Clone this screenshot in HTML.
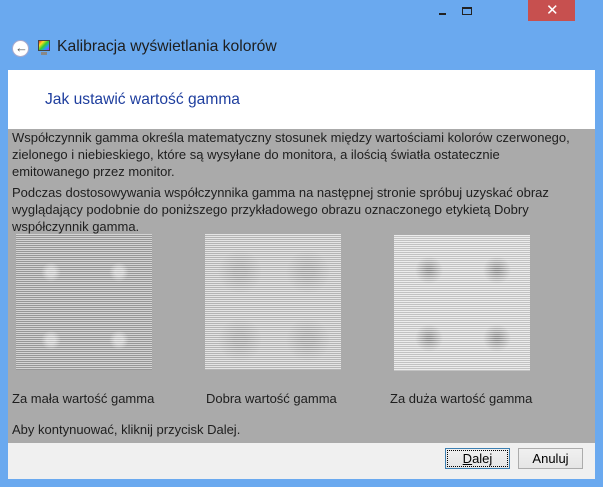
<!DOCTYPE html>
<html><head><meta charset="utf-8"><style>
*{margin:0;padding:0;box-sizing:border-box}
body{width:603px;height:487px;background:#6aa9ef;position:relative;overflow:hidden;font-family:"Liberation Sans",sans-serif;font-size:13px;color:#1e1e1e}
.abs{position:absolute}
.t{white-space:nowrap;position:absolute;left:12px}
.img{position:absolute;width:136px;height:136px}
.stripes{position:absolute;inset:0;background:repeating-linear-gradient(to bottom,rgba(255,255,255,.5) 0 1px,rgba(0,0,0,.1) 1px 2px)}
.btn{position:absolute;top:448px;height:21px;width:65px;background:linear-gradient(#f0f0f0,#e5e5e5);border:1px solid #acacac;text-align:center;line-height:19px;font-size:13px;color:#000}
</style></head><body>
<div class="abs" style="left:528px;top:0;width:47px;height:21px;background:#c7504f"></div>
<div class="abs" style="left:546px;top:1px;color:#fff;font-size:15px">✕</div>
<div class="abs" style="left:439px;top:13px;width:7px;height:2px;background:#222"></div>
<div class="abs" style="left:462px;top:7px;width:10px;height:8px;border:1px solid #222;border-top-width:2px"></div>
<div class="abs" style="left:12px;top:40px;width:17px;height:17px;border-radius:50%;background:#fff;border:1px solid #aac"></div>
<div class="abs" style="left:15px;top:40px;font-size:13px;color:#555;font-weight:bold">←</div>
<div class="abs" style="left:38px;top:40px;width:12px;height:11px;background:linear-gradient(135deg,#e33,#fd2,#3c3,#29f,#a3f);border:1px solid #444"></div>
<div class="abs" style="left:41px;top:52px;width:6px;height:3px;background:#888"></div>
<div class="abs" style="left:57px;top:38px;font-size:15.7px;color:#1e1e1e">Kalibracja wyświetlania kolorów</div>
<div class="abs" style="left:8px;top:70px;width:587px;height:59px;background:#fff"></div>
<div class="abs" style="left:45px;top:91px;font-size:15.6px;color:#1e3e9e">Jak ustawić wartość gamma</div>
<div class="abs" style="left:8px;top:129px;width:587px;height:314px;background:#aaaaaa"></div>
<div class="abs" style="left:8px;top:443px;width:587px;height:36px;background:#f0f0f0"></div>
<div class="t" style="top:130px">Współczynnik gamma określa matematyczny stosunek między wartościami kolorów czerwonego,</div>
<div class="t" style="top:147px">zielonego i niebieskiego, które są wysyłane do monitora, a ilością światła ostatecznie</div>
<div class="t" style="top:164px">emitowanego przez monitor.</div>
<div class="t" style="top:185px">Podczas dostosowywania współczynnika gamma na następnej stronie spróbuj uzyskać obraz</div>
<div class="t" style="top:202px">wyglądający podobnie do poniższego przykładowego obrazu oznaczonego etykietą Dobry</div>
<div class="t" style="top:219px">współczynnik gamma.</div>
<div class="img" style="left:16px;top:234px;background:radial-gradient(circle at 35px 38px,#d4d4d4 0 4px,transparent 10px),radial-gradient(circle at 103px 38px,#d4d4d4 0 4px,transparent 10px),radial-gradient(circle at 35px 106px,#d4d4d4 0 4px,transparent 10px),radial-gradient(circle at 103px 106px,#d4d4d4 0 4px,transparent 10px),#a8a8a8"><div class="stripes"></div></div>
<div class="img" style="left:205px;top:234px;background:radial-gradient(circle at 35px 38px,#b0b0b0 0 6px,transparent 22px),radial-gradient(circle at 103px 38px,#b0b0b0 0 6px,transparent 22px),radial-gradient(circle at 35px 106px,#b0b0b0 0 6px,transparent 22px),radial-gradient(circle at 103px 106px,#b0b0b0 0 6px,transparent 22px),#c8c8c8"><div class="stripes"></div></div>
<div class="img" style="left:394px;top:235px;background:radial-gradient(circle at 35px 35px,#999 0 2px,transparent 14px),radial-gradient(circle at 103px 35px,#999 0 2px,transparent 14px),radial-gradient(circle at 35px 103px,#999 0 2px,transparent 14px),radial-gradient(circle at 103px 103px,#999 0 2px,transparent 14px),#d8d8d8"><div class="stripes"></div></div>
<div class="t" style="top:391px">Za mała wartość gamma</div>
<div class="t" style="top:391px;left:206px">Dobra wartość gamma</div>
<div class="t" style="top:391px;left:390px">Za duża wartość gamma</div>
<div class="t" style="top:422px">Aby kontynuować, kliknij przycisk Dalej.</div>
<div class="btn" style="left:445px;border-color:#3c7fb1;outline:1px dotted #000;outline-offset:-3px"><u>D</u>alej</div>
<div class="btn" style="left:518px">Anuluj</div>
</body></html>
